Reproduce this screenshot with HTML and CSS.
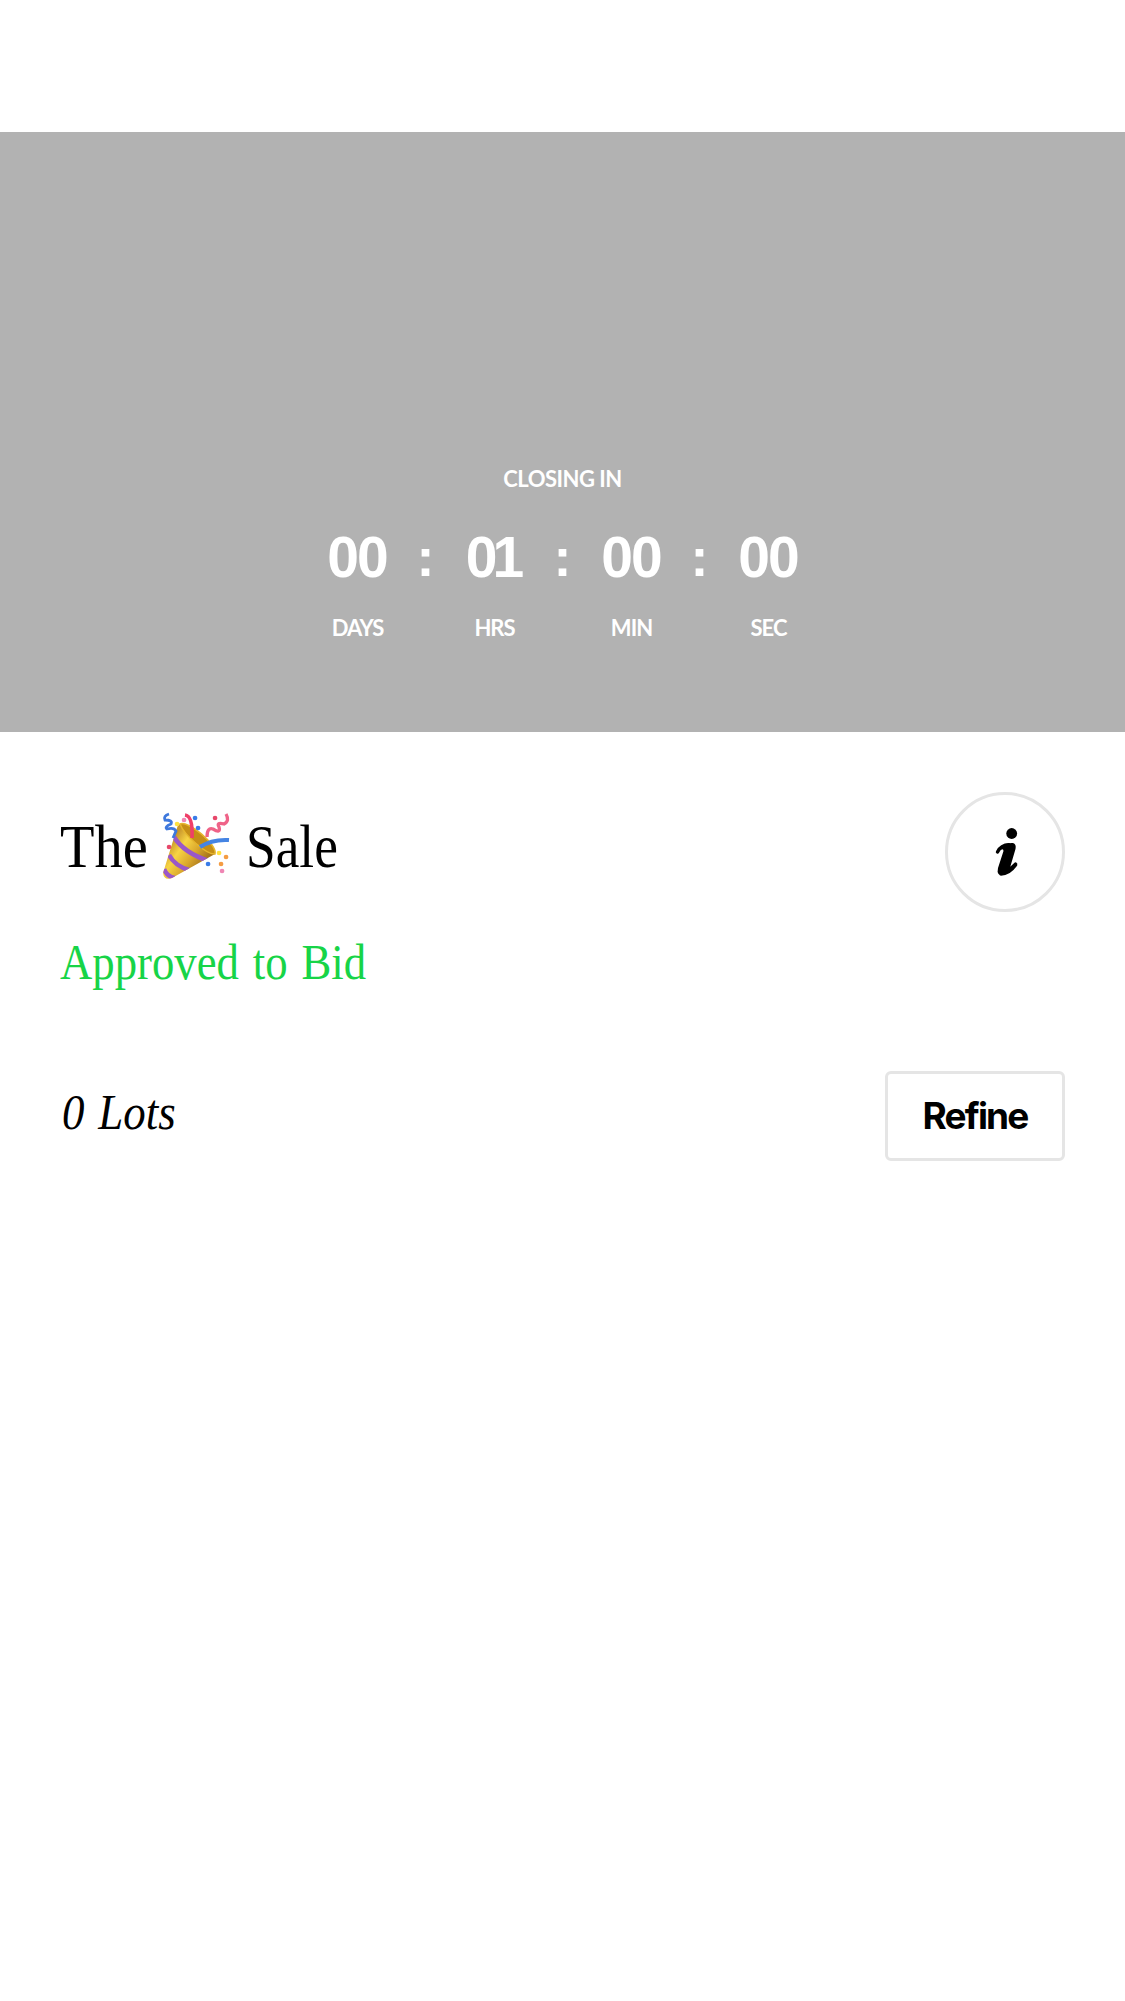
FILE: index.html
```
<!DOCTYPE html>
<html lang="en">
<head>
<meta charset="utf-8">
<title>The 🎉 Sale</title>
<link rel="stylesheet" href="styles.css">
</head>
<body>
<header class="hero">
  <div class="closing">CLOSING IN</div>
  <div class="timer">
    <div class="unit"><span class="num">00</span><span class="label">DAYS</span></div>
    <div class="colon">:</div>
    <div class="unit"><span class="num one">01</span><span class="label">HRS</span></div>
    <div class="colon">:</div>
    <div class="unit"><span class="num">00</span><span class="label">MIN</span></div>
    <div class="colon">:</div>
    <div class="unit"><span class="num">00</span><span class="label">SEC</span></div>
  </div>
</header>
<main class="sale">
  <div class="title-row">
    <h1 class="title">
      <span class="word the">The</span>
      <svg class="party" viewBox="0 0 70 70" role="img" aria-label="🎉">
        <defs>
          <linearGradient id="cone" x1="10" y1="30" x2="42" y2="52" gradientUnits="userSpaceOnUse">
            <stop offset="0" stop-color="#c9962c"/><stop offset=".3" stop-color="#f7d444"/><stop offset=".65" stop-color="#dba92d"/><stop offset="1" stop-color="#a8761c"/>
          </linearGradient>
          <clipPath id="coneclip"><path d="M20 12 Q31 18 42 28 Q54 38 54 42 L11 66 Q3 69 2 61 L16 16Q17 12 20 12Z"/></clipPath>
        </defs>
        <g clip-path="url(#coneclip)">
          <path d="M0 0H70V70H0Z" fill="url(#cone)"/>
          <path d="M13 25 Q23 41 48 49M8 43 Q14 54 28 58M3 57 Q6 65 14 66" fill="none" stroke="#9a57c8" stroke-width="4.6"/>
        </g>
        <path d="M19 12 C27 8 57 33 54 42 C46 43 23 23 19 12Z" fill="#c58e16" stroke="#e6b52d" stroke-width="1.5"/>
        <path d="M24 3 Q32 4 31 26" fill="none" stroke="#ef3f68" stroke-width="3.6"/>
        <path d="M39 35 Q51 27 68 28" fill="none" stroke="#4584e3" stroke-width="4"/>
        <path d="M8 2 Q2 4 4 8 Q12 8 10 12 Q3 15 6 17 Q13 15 15 19 L12 26" fill="none" stroke="#3e78dd" stroke-width="2.8"/>
        <path d="M46 25 Q46 15 52 17 Q60 22 58 15 Q55 10 63 12 Q69 9 65 2" fill="none" stroke="#ef6388" stroke-width="3.3"/>
        <g stroke-width="4.6" stroke-linecap="round">
          <path d="M34 6h.1M37 16h.1M47 52h.1" stroke="#397ce8"/>
          <path d="M23 8h.1M61 59h.1" stroke="#ef86b4"/>
          <path d="M54 6h.1M8 35h.1" stroke="#e7476a"/>
          <path d="M16 12h.1M58 41h.1" stroke="#ffe141"/>
          <path d="M65 45h.1M60 52h.1" stroke="#f49c43"/>
        </g>
      </svg>
      <span class="word name">Sale</span>
    </h1>
    <button class="info" aria-label="Information">
      <svg viewBox="0 0 120 120">
        <circle cx="66.7" cy="41.5" r="5.4"/>
        <path d="M57 54 Q62 50.5 68 51 Q71.5 52 70.5 57 L65.5 74 Q64 79 60 82 Q56 84 53.5 82 Q52 80 53 76 L58.5 59 Q58.5 56 55 58Z"/>
        <path class="tails" d="M52.5 60 Q56 53 64 52.8 M56 82 Q64 82 70.5 73 M63 77.5 Q67 76 70.5 72"/>
      </svg>
    </button>
  </div>
  <p class="status"><span class="word">Approved to Bid</span></p>
  <div class="lots-row">
    <p class="lots"><span class="word">0 Lots</span></p>
    <button class="refine">Refine</button>
  </div>
</main>
</body>
</html>
```
FILE: styles.css
```
* { box-sizing: border-box; }
body { margin: 0; padding-top: 132px; background: #fff; color: #000; font-family: "Liberation Serif", serif; min-height: 2001px; }
h1, p { margin: 0; font-weight: 400; }
button { padding: 0; background: #fff; border: 3px solid #e5e5e5; color: #000; }
.word { display: inline-block; white-space: nowrap; transform-origin: 0 50%; }

.hero { height: 600px; padding-top: 332px; background: #b2b2b2; color: #fff; font-family: Lato, sans-serif; font-weight: 700; text-align: center; }
.closing { font-size: 22px; line-height: 30px; letter-spacing: -0.5px; }
.timer { display: flex; justify-content: center; margin-top: 33px; }
.unit { width: 80px; display: flex; flex-direction: column; align-items: center; }
.num { font: 700 57px/60px "Liberation Sans", sans-serif; letter-spacing: -2px; margin-right: 0; }
.one { letter-spacing: -5px; margin-right: 3px; }
.label { margin-top: 26px; font-size: 22px; line-height: 30px; letter-spacing: -1px; margin-right: -1px; }
.colon { width: 57px; font: 700 54px/61px "Liberation Sans", sans-serif; }

.sale { padding: 60px 60px 0; }
.title-row { display: flex; justify-content: space-between; }
.title { display: flex; height: 120px; font-size: 62px; line-height: 108px; }
.the { width: 101px; transform: scaleX(.91); }
.party { width: 70px; height: 70px; margin-top: 20px; }
.name { margin-left: 15px; transform: scaleX(.86); }
.info { width: 120px; height: 120px; border-radius: 50%; }
.info svg { display: block; width: 120px; height: 120px; margin: -3px; }
.tails { fill: none; stroke: #000; stroke-width: 3.4; stroke-linecap: round; }
.status { height: 60px; margin-top: 20px; font-size: 50px; line-height: 60px; color: #17d447; }
.status .word { transform: scaleX(.895); word-spacing: 3px; }
.lots-row { display: flex; justify-content: space-between; align-items: center; margin-top: 79px; height: 90px; }
.lots { padding: 0 0 8px 2px; font-size: 51px; line-height: 60px; font-style: italic; }
.lots .word { transform: scaleX(.88); word-spacing: 3px; }
.refine { width: 180px; height: 90px; border-radius: 6px; font: 700 37px/84px Inter, sans-serif; letter-spacing: -1.8px; }
```
